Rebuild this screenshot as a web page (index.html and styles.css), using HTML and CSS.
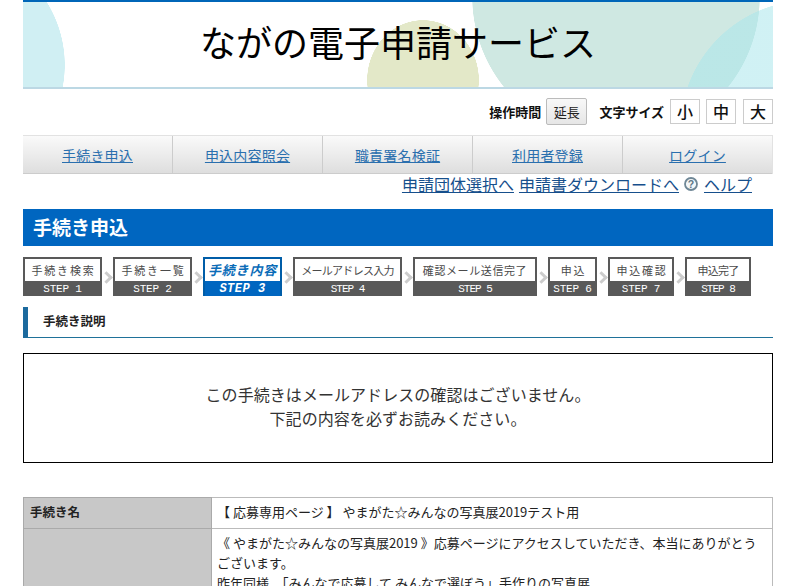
FILE: index.html
```html
<!DOCTYPE html>
<html lang="ja">
<head>
    <meta charset="UTF-8">
    <meta name="viewport" content="width=device-width, initial-scale=1.0">
    <title>ながの電子申請サービス</title>
    <link rel="stylesheet" href="styles.css">
</head>
<body>
<div class="wrap">
    <header class="banner">
        <h1>ながの電子申請サービス</h1>
    </header>

    <div class="tools">
        <span class="tools-label">操作時間</span>
        <button type="button" class="extend">延長</button>
        <span class="tools-label size-label">文字サイズ</span>
        <a class="size-btn">小</a>
        <a class="size-btn">中</a>
        <a class="size-btn">大</a>
    </div>

    <nav class="gnav">
        <a href="#">手続き申込</a>
        <a href="#">申込内容照会</a>
        <a href="#">職責署名検証</a>
        <a href="#">利用者登録</a>
        <a href="#">ログイン</a>
    </nav>

    <div class="sublinks">
        <a href="#">申請団体選択へ</a>
        <a href="#">申請書ダウンロードへ</a>
        <svg class="help-icon" width="14" height="14" viewBox="0 0 14 14">
            <circle cx="7" cy="7" r="6" fill="#f4f7f8" stroke="#6f8796" stroke-width="1.8"/>
            <text x="7" y="10.6" text-anchor="middle" font-size="10.5" font-weight="700" fill="#5f7888" font-family="Liberation Sans, sans-serif">?</text>
        </svg>
        <a href="#">ヘルプ</a>
    </div>

    <h2 class="page-title">手続き申込</h2>

    <ol class="steps">
        <li class="step"><span class="step-name">手続き検索</span><span class="step-no">STEP 1</span></li>
        <li class="step"><span class="step-name">手続き一覧</span><span class="step-no">STEP 2</span></li>
        <li class="step active"><span class="step-name">手続き内容</span><span class="step-no">STEP 3</span></li>
        <li class="step narrow"><span class="step-name">メールアドレス入力</span><span class="step-no">STEP 4</span></li>
        <li class="step tight"><span class="step-name">確認メール送信完了</span><span class="step-no">STEP 5</span></li>
        <li class="step"><span class="step-name">申込</span><span class="step-no">STEP 6</span></li>
        <li class="step"><span class="step-name">申込確認</span><span class="step-no">STEP 7</span></li>
        <li class="step narrow"><span class="step-name">申込完了</span><span class="step-no">STEP 8</span></li>
    </ol>

    <h3 class="section-title">手続き説明</h3>

    <div class="notice">
        <p>この手続きはメールアドレスの確認はございません。</p>
        <p>下記の内容を必ずお読みください。</p>
    </div>

    <table class="detail">
        <tr>
            <th>手続き名</th>
            <td>【 応募専用ページ 】 やまがた☆みんなの写真展2019テスト用</td>
        </tr>
        <tr>
            <th></th>
            <td>《 やまがた☆みんなの写真展2019 》応募ページにアクセスしていただき、本当にありがとうございます。<br>
                昨年同様、「みんなで応募して みんなで選ぼう」手作りの写真展、</td>
        </tr>
    </table>
</div>
</body>
</html>
```

FILE: styles.css
```css
html, body {
    height: 100%;
    margin: 0;
    overflow: hidden;
    background-color: #fff;
}
body {
    font-family: "Noto Sans CJK JP", "Liberation Sans", sans-serif;
    color: #222;
}
.wrap {
    width: 750px;
    margin-left: 23px;
}

/* ヘッダー */
.banner {
    height: 78px;
    padding-bottom: 7px;
    border-top: 2px solid #0066b8;
    border-bottom: 2px solid #bcd8e4;
    background-color: #fff;
    background-image:
        radial-gradient(circle 130px at 787px 128px, rgba(170, 230, 235, .55) 99.6%, transparent 100%),
        radial-gradient(circle 144px at 593px -5px, #cfe8e2 99.6%, transparent 100%),
        radial-gradient(ellipse 56px 60px at 400px 78px, #e3e8c8 99.4%, transparent 100%),
        radial-gradient(circle 119px at -77px 63px, #d0eff3 99.6%, transparent 100%);
    display: flex;
    align-items: center;
    justify-content: center;
}
.banner h1 {
    margin: 0;
    font-size: 36px;
    font-weight: 400;
    line-height: 1;
    color: #000;
}

/* 操作時間・文字サイズ */
.tools {
    display: flex;
    align-items: center;
    justify-content: flex-end;
    height: 27px;
    margin-top: 9px;
}
.tools-label {
    font-size: 13px;
    font-weight: 700;
    color: #111;
}
.extend {
    width: 41px;
    height: 27px;
    margin-left: 5px;
    padding: 0;
    font-family: inherit;
    font-size: 13px;
    color: #222;
    border: 1px solid #bbb;
    border-radius: 2px;
    background: linear-gradient(#f8f8f8, #e6e6e6);
}
.size-label {
    margin-left: 12px;
    margin-right: 6px;
}
.size-btn {
    width: 28px;
    height: 23px;
    margin-left: 6px;
    border: 1px solid #ccc;
    background-color: #fff;
    font-size: 16px;
    font-weight: 500;
    line-height: 23px;
    text-align: center;
    color: #111;
}
.size-label + .size-btn {
    margin-left: 0;
}
.size-btn:last-child {
    margin-left: 7px;
}

/* グローバルナビ */
.gnav {
    display: grid;
    grid-template-columns: repeat(5, 1fr);
    height: 37px;
    margin-top: 10px;
    border-top: 1px solid #e2e2e2;
    border-bottom: 1px solid #ccc;
    background: linear-gradient(#fafafa, #dedede);
}
.gnav a {
    font-size: 14px;
    line-height: 38px;
    letter-spacing: .2px;
    text-align: center;
    color: #2a6fae;
    border-right: 1px solid #ccc;
}
.gnav a:last-child {
    border-right: 1px solid #e2e2e2;
}

.sublinks {
    display: flex;
    align-items: center;
    justify-content: flex-end;
    gap: 5px;
    height: 20px;
    padding-right: 21px;
}
.sublinks a {
    font-size: 16px;
    color: #164f8c;
}
.help-icon {
    margin-right: 1px;
}

.page-title {
    margin: 15px 0 0;
    height: 37px;
    padding-left: 10px;
    font-size: 19px;
    font-weight: 700;
    line-height: 35px;
    color: #fff;
    background-color: #0066c0;
}

/* ステップ */
.steps {
    display: grid;
    grid-template-columns: 79px 79px 79px 109px 124px 49px 66px 66px;
    column-gap: 11px;
    margin: 11px 0 0;
    padding: 0;
    list-style: none;
}
.step {
    position: relative;
    display: flex;
    flex-direction: column;
    height: 39px;
    border: 2px solid #595959;
    border-bottom: 0;
    box-sizing: border-box;
    background-color: #595959;
}
.step::after {
    content: "";
    position: absolute;
    top: 14px;
    right: -11px;
    width: 6px;
    height: 6px;
    border-top: 3px solid #ccc;
    border-right: 3px solid #ccc;
    transform: rotate(45deg);
}
.step:last-child::after {
    display: none;
}
.step-name {
    height: 22px;
    font-size: 11px;
    line-height: 22px;
    letter-spacing: 1.8px;
    text-indent: 2px;
    text-align: center;
    white-space: nowrap;
    color: #4a4a4a;
    background-color: #fff;
}
.step.tight .step-name {
    letter-spacing: .6px;
    text-indent: 0;
}
.step.narrow .step-name {
    letter-spacing: -.7px;
    text-indent: 0;
}
.step-no {
    flex: 1;
    font-family: "Liberation Mono", monospace;
    font-size: 11px;
    line-height: 16px;
    letter-spacing: -.2px;
    text-align: center;
    white-space: pre;
    color: #fff;
}
.step.tight .step-no, .step.narrow .step-no {
    letter-spacing: -1px;
}
.step.active {
    border-color: #005da8;
    background-color: #0066c0;
}
.step.active .step-name {
    font-size: 13px;
    font-weight: 700;
    font-style: italic;
    letter-spacing: .8px;
    text-indent: 0;
    color: #0b6cb8;
}
.step.active .step-no {
    font-size: 12px;
    font-weight: 700;
    font-style: italic;
    letter-spacing: .5px;
}

.section-title {
    margin: 11px 0 0;
    height: 30px;
    padding-left: 15px;
    font-size: 12.5px;
    font-weight: 700;
    line-height: 27px;
    color: #222;
    border-left: 5px solid #1c6a9e;
    border-bottom: 1px solid #1f7199;
}

.notice {
    height: 104px;
    padding-bottom: 4px;
    margin-top: 15px;
    border: 1px solid #000;
    display: flex;
    flex-direction: column;
    justify-content: center;
    font-size: 16px;
    line-height: 24px;
    letter-spacing: .06px;
    text-align: center;
    color: #333;
}
.notice p {
    margin: 0;
}

.detail {
    width: 750px;
    margin-top: 34px;
    border-collapse: collapse;
    table-layout: fixed;
    font-size: 13px;
}
.detail th, .detail td {
    border: 1px solid #aaa;
    line-height: 20px;
    vertical-align: top;
    padding: 4px 5px 6px;
}
.detail th {
    width: 176px;
    padding-left: 6px;
    text-align: left;
    font-size: 12.5px;
    font-weight: 700;
    background-color: #c8c8c8;
    color: #222;
}
.detail td {
    border-color: #bbb;
    color: #222;
}
```
